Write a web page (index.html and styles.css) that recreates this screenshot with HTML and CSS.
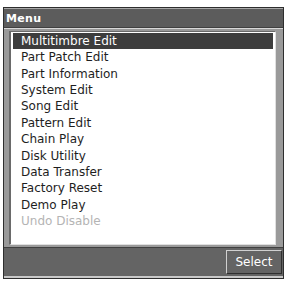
FILE: index.html
```html
<!DOCTYPE html>
<html>
<head>
<meta charset="utf-8">
<link rel="stylesheet" href="styles.css">
</head>
<body>
<div class="window">
  <div class="titlebar"><span class="title">Menu</span></div>
  <div class="content">
    <ul class="list">
      <li class="item selected">Multitimbre Edit</li>
      <li class="item">Part Patch Edit</li>
      <li class="item">Part Information</li>
      <li class="item">System Edit</li>
      <li class="item">Song Edit</li>
      <li class="item">Pattern Edit</li>
      <li class="item">Chain Play</li>
      <li class="item">Disk Utility</li>
      <li class="item">Data Transfer</li>
      <li class="item">Factory Reset</li>
      <li class="item">Demo Play</li>
      <li class="item disabled">Undo Disable</li>
    </ul>
  </div>
  <div class="footer">
    <div class="button">Select</div>
  </div>
</div>
</body>
</html>
```
FILE: styles.css
```css
html, body {
  margin: 0;
  padding: 0;
  background: #ffffff;
}
body {
  width: 287px;
  height: 284px;
  padding: 7px 3px 0 3px;
  box-sizing: border-box;
  font-family: "DejaVu Sans", "Liberation Sans", sans-serif;
}
.window {
  width: 281px;
  height: 272px;
  box-sizing: border-box;
  border: 1px solid #2e2e2e;
  background: #9a9a9a;
  display: flex;
  flex-direction: column;
}
.titlebar {
  height: 20px;
  box-sizing: border-box;
  background: #5c5c5c;
  border-top: 1px solid #a8a8a8;
  border-bottom: 1px solid #404040;
  display: flex;
  align-items: center;
  padding-left: 2px;
}
.title {
  color: #ffffff;
  font-weight: bold;
  font-size: 11px;
  letter-spacing: 0.3px;
}
.content {
  flex: 1;
  padding: 2px 7px 2px 5px;
  border-top: 1px solid #d8d8d8;
  background: #9a9a9a;
  display: flex;
}
.list {
  flex: 1;
  margin: 0;
  padding: 1px 2px 0 2px;
  list-style: none;
  background: #ffffff;
  border-left: 2px solid #6a6a6a;
  border-top: 1px solid #6a6a6a;
  border-right: 1px solid #e0e0e0;
  border-bottom: 1px solid #e0e0e0;
}
.item {
  height: 16.36px;
  line-height: 16px;
  font-size: 12px;
  color: #1e1e1e;
  padding-left: 8px;
  white-space: nowrap;
}
.item.selected {
  background: #3d3d3d;
  color: #ffffff;
}
.item.disabled {
  color: #b4b4b4;
}
.footer {
  height: 31px;
  box-sizing: border-box;
  background: #646464;
  border-top: 1px solid #404040;
  border-bottom: 2px solid #c8c8c8;
  display: flex;
  justify-content: flex-end;
  align-items: center;
  padding-right: 1px;
}
.button {
  width: 56px;
  height: 24px;
  box-sizing: border-box;
  border: 1px solid #d0d0d0;
  border-right-color: #303030;
  border-bottom-color: #303030;
  background: #646464;
  color: #ffffff;
  font-size: 12px;
  display: flex;
  align-items: center;
  justify-content: center;
}
```
